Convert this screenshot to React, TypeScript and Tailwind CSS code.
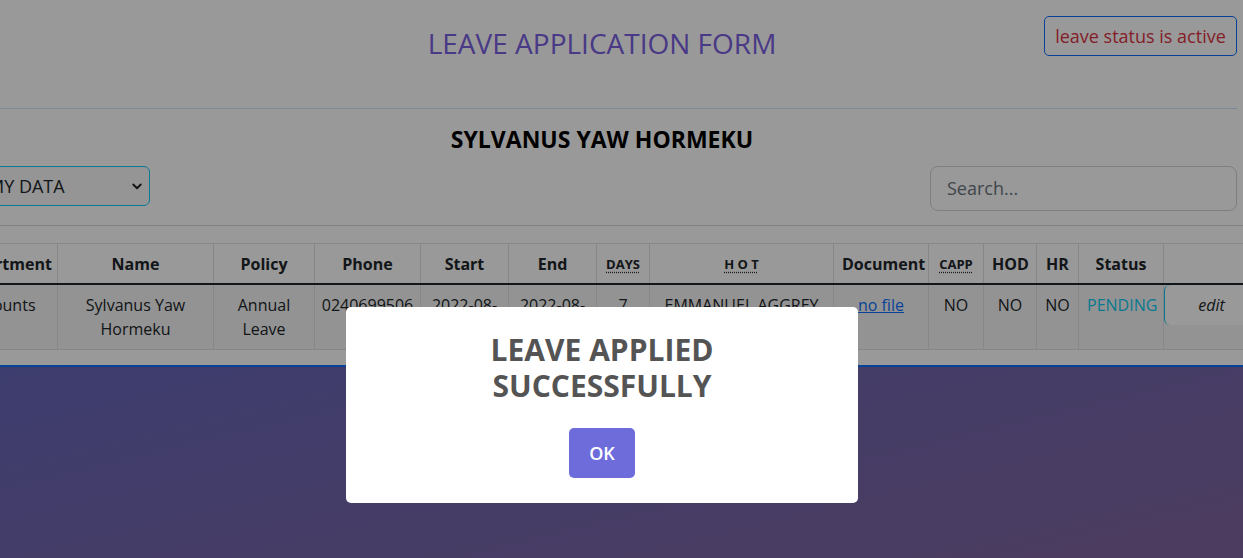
import React from "react";

const columns = [
  { label: "Department", width: 112 },
  { label: "Name", width: 156 },
  { label: "Policy", width: 101 },
  { label: "Phone", width: 106 },
  { label: "Start", width: 88 },
  { label: "End", width: 88 },
  { label: "DAYS", width: 53, abbr: true },
  { label: "H O T", width: 184, abbr: true },
  { label: "Document", width: 95 },
  { label: "CAPP", width: 55, abbr: true },
  { label: "HOD", width: 53 },
  { label: "HR", width: 42 },
  { label: "Status", width: 85 },
  { label: "", width: 95 },
];

const App: React.FC = () => {
  return (
    <div className="relative h-[558px] w-full overflow-hidden bg-white font-['Open_Sans',sans-serif] text-[#212529]">
      {/* page */}
      <div className="-ml-[33px] w-[1276px] pr-[6px]">
        {/* header */}
        <div className="grid h-[109px] grid-cols-[1fr_auto_1fr] border-b border-[#cfe2ff]">
          <div></div>
          <h1 className="pt-[24px] text-[28px] leading-[38px] text-[#7a5fe0]">LEAVE APPLICATION FORM</h1>
          <div className="flex justify-end pt-[16px]">
            <button className="h-[40px] w-[193px] rounded-[5px] border border-[#0d6efd] text-[18px] text-[#dc3545]">
              leave status is active
            </button>
          </div>
        </div>

        <h2 className="mt-[14px] text-center text-[23px] font-bold leading-[32px] text-black">SYLVANUS YAW HORMEKU</h2>

        <div className="mt-[11px] flex items-start justify-between">
          <div className="ml-[8px] flex h-[40px] w-[175px] items-center justify-between rounded-[6px] border border-[#0dcaf0] bg-[#f8f9fa] pl-[12px] pr-[6px]">
            <span className="text-[18px] text-[#212529]">MY DATA</span>
            <svg width="12" height="12" viewBox="0 0 16 16" fill="none" stroke="#212529" strokeWidth="2.5" strokeLinecap="round" strokeLinejoin="round">
              <path d="M3 6l5 5 5-5" />
            </svg>
          </div>
          <div className="flex h-[45px] w-[307px] items-center rounded-[8px] border border-[#ced4da] px-[16px] text-[18px] text-[#6c757d]">
            Search...
          </div>
        </div>
      </div>

      <div className="mt-[14px] border-b border-[#d4d4d4]"></div>

      {/* table */}
      <div className="ml-[-55px] mt-[17px] w-[1313px]">
        <table className="w-[1313px] table-fixed border-collapse text-[16px] leading-[24px]">
          <colgroup>
            {columns.map((c, i) => (
              <col key={i} style={{ width: c.width }} />
            ))}
          </colgroup>
          <thead>
            <tr className="border-t border-[#dee2e6]">
              {columns.map((c, i) => (
                <th key={i} className="border-x border-b-2 border-x-[#dee2e6] border-b-[#212529] px-[8px] py-[7px] text-center font-bold">
                  {c.abbr ? (
                    <span className="text-[13px] underline decoration-dotted underline-offset-[3px]">{c.label}</span>
                  ) : (
                    c.label
                  )}
                </th>
              ))}
            </tr>
          </thead>
          <tbody>
            <tr className="border-b border-[#dee2e6] bg-[#f6f6f6] text-center align-top">
              <td className="border-x border-[#dee2e6] px-[8px] py-[8px]">Accounts</td>
              <td className="border-x border-[#dee2e6] px-[8px] py-[8px]">Sylvanus Yaw Hormeku</td>
              <td className="border-x border-[#dee2e6] px-[8px] py-[8px]">Annual Leave</td>
              <td className="border-x border-[#dee2e6] px-[4px] py-[8px]">0240699506</td>
              <td className="border-x border-[#dee2e6] px-[8px] py-[8px]">2022-08-10</td>
              <td className="border-x border-[#dee2e6] px-[8px] py-[8px]">2022-08-17</td>
              <td className="border-x border-[#dee2e6] px-[8px] py-[8px]">7</td>
              <td className="border-x border-[#dee2e6] px-[8px] py-[8px]">EMMANUEL AGGREY</td>
              <td className="border-x border-[#dee2e6] px-[8px] py-[8px]">
                <span className="text-[#0d6efd] underline">no file</span>
              </td>
              <td className="border-x border-[#dee2e6] px-[8px] py-[8px]">NO</td>
              <td className="border-x border-[#dee2e6] px-[8px] py-[8px]">NO</td>
              <td className="border-x border-[#dee2e6] px-[8px] py-[8px]">NO</td>
              <td className="border-x border-[#dee2e6] px-[8px] py-[8px] text-[#0dcaf0]">PENDING</td>
              <td className="border-x border-[#dee2e6] p-0">
                <button className="h-[40px] w-full rounded-l-[6px] border-l border-[#0dcaf0] bg-white italic">edit</button>
              </td>
            </tr>
          </tbody>
        </table>
      </div>

      {/* gradient area */}
      <div className="mt-[15px] h-[300px] border-t-2 border-[#0d6efd] bg-gradient-to-br from-[#6766b9] to-[#846498]"></div>

      {/* overlay */}
      <div className="absolute inset-0 bg-black/40"></div>

      {/* alert */}
      <div className="absolute left-[346px] top-[307px] flex h-[196px] w-[512px] flex-col items-center rounded-[5px] bg-white pt-[25px]">
        <h2 className="text-center text-[30px] font-bold leading-[36px] text-[#545454]">
          LEAVE APPLIED
          <br />
          SUCCESSFULLY
        </h2>
        <button className="mt-[24px] h-[50px] w-[66px] rounded-[5px] bg-[#6e6cdb] text-[18px] font-semibold text-white">OK</button>
      </div>
    </div>
  );
};

export default App;
